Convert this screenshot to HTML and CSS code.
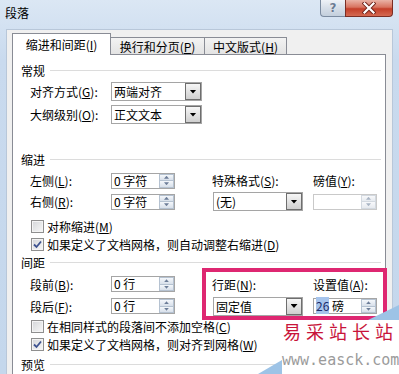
FILE: index.html
```html
<!DOCTYPE html>
<html>
<head>
  <meta charset="UTF-8">
  <meta name="viewport" content="width=device-width, initial-scale=1.0">
  <title>段落</title>
  <link rel="stylesheet" href="styles.css">
</head>
<body>
  <div class="titlebar">
    <span class="title">段落</span>
    <div class="caption">
      <span class="help">?</span>
      <span class="close">
        <svg width="14" height="12" viewBox="0 0 14 12">
          <path d="M2.5 1.5 L11.5 10.5 M11.5 1.5 L2.5 10.5" stroke="#6e231a" stroke-width="4" stroke-linecap="square"/>
          <path d="M2.5 1.5 L11.5 10.5 M11.5 1.5 L2.5 10.5" stroke="#ffffff" stroke-width="2.2" stroke-linecap="square"/>
        </svg>
      </span>
    </div>
  </div>

  <div class="client">
    <div class="tabs">
      <div class="tab active">缩进和间距(<u>I</u>)</div>
      <div class="tab t2">换行和分页(<u>P</u>)</div>
      <div class="tab t3">中文版式(<u>H</u>)</div>
    </div>

    <div class="panel">
      <div class="group">常规</div>
      <div class="rows">
        <div class="row">
          <span class="lbl">对齐方式(<u>G</u>):</span>
          <div class="combo"><span>两端对齐</span><i class="drop"></i></div>
        </div>
        <div class="row">
          <span class="lbl">大纲级别(<u>O</u>):</span>
          <div class="combo"><span>正文文本</span><i class="drop"></i></div>
        </div>
      </div>

      <div class="group indent-title">缩进</div>
      <div class="grid">
        <span>左侧(<u>L</u>):</span>
        <div class="spin"><span>0 字符</span><div class="arrows"><i class="up"></i><i class="dn"></i></div></div>
        <span></span>
        <span>特殊格式(<u>S</u>):</span>
        <span></span>
        <span>磅值(<u>Y</u>):</span>

        <span>右侧(<u>R</u>):</span>
        <div class="spin"><span>0 字符</span><div class="arrows"><i class="up"></i><i class="dn"></i></div></div>
        <span></span>
        <div class="combo"><span>(无)</span><i class="drop"></i></div>
        <span></span>
        <div class="spin off"><span></span><div class="arrows"><i class="up"></i><i class="dn"></i></div></div>
      </div>

      <div class="checks">
        <div class="check"><span class="box"></span>对称缩进(<u>M</u>)</div>
        <div class="check"><span class="box on"><svg width="11" height="11" viewBox="0 0 11 11"><path d="M2 5.5 L4.5 8 L9 2.5" fill="none" stroke="#3d5290" stroke-width="1.8"/></svg></span>如果定义了文档网格，则自动调整右缩进(<u>D</u>)</div>
      </div>

      <div class="group spacing-title">间距</div>
      <div class="grid tall">
        <span>段前(<u>B</u>):</span>
        <div class="spin"><span>0 行</span><div class="arrows"><i class="up"></i><i class="dn"></i></div></div>
        <span></span>
        <span>行距(<u>N</u>):</span>
        <span></span>
        <span>设置值(<u>A</u>):</span>

        <span>段后(<u>F</u>):</span>
        <div class="spin"><span>0 行</span><div class="arrows"><i class="up"></i><i class="dn"></i></div></div>
        <span></span>
        <div class="combo"><span>固定值</span><i class="drop"></i></div>
        <span></span>
        <div class="spin"><span><b class="sel">26</b> 磅</span><div class="arrows"><i class="up"></i><i class="dn"></i></div></div>
      </div>

      <div class="checks tight">
        <div class="check"><span class="box"></span>在相同样式的段落间不添加空格(<u>C</u>)</div>
        <div class="check"><span class="box on"><svg width="11" height="11" viewBox="0 0 11 11"><path d="M2 5.5 L4.5 8 L9 2.5" fill="none" stroke="#3d5290" stroke-width="1.8"/></svg></span>如果定义了文档网格，则对齐到网格(<u>W</u>)</div>
      </div>

      <div class="group preview-title">预览</div>
    </div>
  </div>

  <div class="mark"></div>
  <div class="stamp">
    <div class="stamp-cn">易采站长站</div>
    <div class="stamp-url">www.easck.com</div>
  </div>
</body>
</html>
```

FILE: styles.css
```css
body {
  margin: 0;
  width: 399px;
  height: 374px;
  overflow: hidden;
  position: relative;
  font-family: "Noto Sans CJK SC", sans-serif;
  font-size: 12px;
  color: #000000;
  background: linear-gradient(#dbe7f4, #c9daee 60px, #c4d7ec);
}
u {
  text-decoration: underline;
}
.titlebar {
  display: flex;
  justify-content: space-between;
  height: 29px;
}
.title {
  padding: 6px 0 0 5px;
  line-height: 14px;
}
.caption {
  display: flex;
  height: 17px;
  margin-right: 6px;
}
.help {
  width: 25px;
  box-sizing: border-box;
  border: 1px solid #7b8ba0;
  border-top: none;
  border-right: none;
  border-radius: 0 0 0 4px;
  background: linear-gradient(#eef2f7, #d6dee8 50%, #c3cfdc);
  text-align: center;
  font: bold 12px/16px "DejaVu Sans", sans-serif;
  color: #6b7b92;
  text-shadow: 0 0 1px #ffffff;
}
.close {
  width: 48px;
  box-sizing: border-box;
  border: 1px solid #7a2e24;
  border-top: none;
  border-radius: 0 0 4px 0;
  background: linear-gradient(#eab3a6, #d8735f 45%, #c43f29 55%, #d46a52);
  display: flex;
  align-items: center;
  justify-content: center;
}
.client {
  margin: 0 6px;
  height: 341px;
  padding-top: 3px;
  border: 1px solid #b8c7d9;
  border-bottom: none;
  background: #f0f0f0;
}
.tabs {
  display: flex;
  align-items: flex-end;
  height: 21px;
  padding-left: 5px;
}
.tab {
  box-sizing: border-box;
  height: 17px;
  padding-top: 1px;
  border: 1px solid #898c95;
  border-left: none;
  border-bottom: none;
  background: linear-gradient(#f3f3f3, #e3e3e3);
  display: flex;
  align-items: center;
  justify-content: center;
}
.tab.active {
  width: 99px;
  height: 22px;
  padding-top: 0;
  margin-bottom: -1px;
  border-left: 1px solid #898c95;
  background: #ffffff;
  position: relative;
  z-index: 1;
}
.tab.t2 {
  width: 94px;
}
.tab.t3 {
  width: 82px;
}
.panel {
  margin-left: 5px;
  width: 374px;
  height: 320px;
  box-sizing: border-box;
  border: 1px solid #898c95;
  border-bottom: none;
  background: #ffffff;
}
.group {
  display: flex;
  align-items: center;
  height: 16px;
  padding-left: 8px;
  margin: 7px 4px 0 0;
}
.group::after {
  content: "";
  flex: 1;
  height: 1px;
  margin-left: 5px;
  background: #dcdcdc;
}
.indent-title {
  margin-top: 25px;
}
.spacing-title {
  margin-top: 1px;
}
.preview-title {
  margin-top: 3px;
}
.rows {
  margin-top: 2px;
}
.row {
  display: flex;
  align-items: center;
  height: 23px;
  padding-left: 17px;
}
.lbl {
  width: 81px;
}
.combo {
  box-sizing: border-box;
  width: 91px;
  height: 19px;
  border: 1px solid #a5a5a5;
  background: #ffffff;
  display: flex;
  align-items: center;
}
.combo span {
  flex: 1;
  padding-left: 2px;
}
.drop {
  width: 16px;
  align-self: stretch;
  box-sizing: border-box;
  border: 1px solid #6e6e6e;
  background: linear-gradient(#f6f6f6, #cfcfcf);
  display: flex;
  align-items: center;
  justify-content: center;
}
.drop::after {
  content: "";
  width: 7px;
  height: 4px;
  background: #000000;
  clip-path: polygon(0 0, 100% 0, 50% 100%);
}
.grid {
  display: grid;
  grid-template-columns: 81px 64px 37px 90px 11px 64px;
  grid-auto-rows: 21px;
  align-items: center;
  margin-top: 3px;
  padding-left: 17px;
}
.grid.tall {
  grid-auto-rows: 22px;
}
.grid .combo {
  width: 90px;
  margin-left: 1px;
}
.spin {
  box-sizing: border-box;
  width: 64px;
  height: 16px;
  border: 1px solid #a5a5a5;
  background: #ffffff;
  display: flex;
}
.spin > span {
  flex: 1;
  padding-left: 2px;
  line-height: 14px;
}
.sel {
  font-weight: normal;
  background: #a6c4ec;
  color: #1c2c6a;
}
.arrows {
  width: 15px;
  display: flex;
  flex-direction: column;
}
.arrows i {
  flex: 1;
  border: 1px solid #b5c2d1;
  background: linear-gradient(#f4f7fb, #d8e0ea);
  display: flex;
  align-items: center;
  justify-content: center;
}
.arrows i + i {
  border-top: none;
}
.arrows i::after {
  content: "";
  width: 5px;
  height: 3px;
  background: #6c7d98;
}
.arrows .up::after {
  clip-path: polygon(50% 0, 100% 100%, 0 100%);
}
.arrows .dn::after {
  clip-path: polygon(0 0, 100% 0, 50% 100%);
}
.spin.off {
  border-color: #c9c9c9;
}
.spin.off .arrows i {
  border-color: #d3d9e0;
  background: linear-gradient(#f8f9fb, #e6eaef);
}
.spin.off .arrows i::after {
  background: #a9b4c4;
}
.checks {
  margin-top: 5px;
}
.checks.tight {
  margin-top: 0;
}
.check {
  display: flex;
  align-items: center;
  height: 18px;
  padding-left: 18px;
}
.box {
  width: 13px;
  height: 13px;
  box-sizing: border-box;
  margin-right: 3px;
  border: 1px solid #8f8f8f;
  background: linear-gradient(135deg, #d3d5d8, #f8f8f8);
  box-shadow: inset 0 0 0 1px #f4f4f4;
  display: flex;
  align-items: center;
  justify-content: center;
}
.box svg {
  display: block;
}
.mark {
  position: absolute;
  left: 202px;
  top: 268px;
  width: 185px;
  height: 52px;
  box-sizing: border-box;
  border: 4px solid #de2771;
}
.stamp {
  position: absolute;
  left: 282px;
  top: 320px;
  width: 117px;
  height: 54px;
  background: #ffffff;
}
.stamp::before {
  content: "";
  position: absolute;
  right: 0;
  top: -15px;
  width: 31px;
  height: 15px;
  background: #9dc3e6;
  clip-path: polygon(100% 0, 100% 100%, 0 100%);
}
.stamp::after {
  content: "";
  position: absolute;
  left: -24px;
  bottom: 0;
  width: 24px;
  height: 14px;
  background: #9dc3e6;
  clip-path: polygon(100% 0, 100% 100%, 0 100%);
}
.stamp-cn {
  padding-left: 1px;
  font-size: 18px;
  line-height: 22px;
  letter-spacing: 5px;
  color: #c8143a;
  white-space: nowrap;
}
.stamp-url {
  margin-top: 9px;
  font-family: "DejaVu Sans Mono", monospace;
  font-size: 15px;
  line-height: 18px;
  color: #9b9b9b;
  white-space: nowrap;
}
```
